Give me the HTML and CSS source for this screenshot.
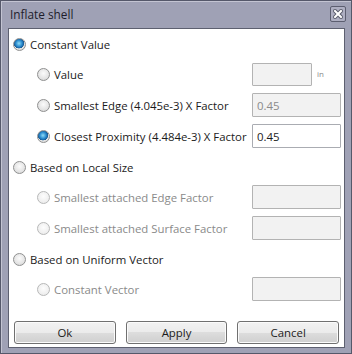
FILE: index.html
```html
<!DOCTYPE html>
<html lang="en">
<head>
    <meta charset="UTF-8">
    <meta name="viewport" content="width=device-width, initial-scale=1.0">
    <title>Inflate shell</title>
    <link rel="stylesheet" href="styles.css">
</head>
<body>
<div class="window">
    <div class="titlebar">
        <span class="title">Inflate shell</span>
        <span class="close-btn">
            <svg width="10" height="10" viewBox="0 0 10 10">
                <path d="M2 2 L8 8 M8 2 L2 8" stroke="#5a5c6c" stroke-width="4" stroke-linecap="square"/>
                <path d="M2 2 L8 8 M8 2 L2 8" stroke="#ffffff" stroke-width="2" stroke-linecap="square"/>
            </svg>
        </span>
    </div>

    <div class="content">
        <div class="groups">
            <!-- Constant value -->
            <div class="group">
                <label class="opt head"><input type="radio" name="mode" class="radio" checked> Constant Value</label>
                <div class="children">
                    <div class="row">
                        <label class="opt"><input type="radio" name="cv" class="radio"> Value</label>
                        <input type="text" class="field field-short" disabled>
                        <span class="unit">in</span>
                    </div>
                    <div class="row">
                        <label class="opt"><input type="radio" name="cv" class="radio"> Smallest Edge (4.045e-3) X Factor</label>
                        <input type="text" class="field" value="0.45" disabled>
                    </div>
                    <div class="row">
                        <label class="opt"><input type="radio" name="cv" class="radio" checked> Closest Proximity (4.484e-3) X Factor</label>
                        <input type="text" class="field" value="0.45">
                    </div>
                </div>
            </div>

            <!-- Local size -->
            <div class="group">
                <label class="opt head"><input type="radio" name="mode" class="radio"> Based on Local Size</label>
                <div class="children">
                    <div class="row">
                        <label class="opt off"><input type="radio" name="ls" class="radio" disabled> Smallest attached Edge Factor</label>
                        <input type="text" class="field" disabled>
                    </div>
                    <div class="row">
                        <label class="opt off"><input type="radio" name="ls" class="radio" disabled> Smallest attached Surface Factor</label>
                        <input type="text" class="field" disabled>
                    </div>
                </div>
            </div>

            <!-- Uniform vector -->
            <div class="group">
                <label class="opt head"><input type="radio" name="mode" class="radio"> Based on Uniform Vector</label>
                <div class="children">
                    <div class="row">
                        <label class="opt off"><input type="radio" name="uv" class="radio" disabled> Constant Vector</label>
                        <input type="text" class="field" disabled>
                    </div>
                </div>
            </div>
        </div>

        <div class="buttons">
            <button>Ok</button>
            <button>Apply</button>
            <button>Cancel</button>
        </div>
    </div>
</div>
</body>
</html>
```

FILE: styles.css
```css
body {
    margin: 0;
    font-family: 'Open Sans', sans-serif;
    font-size: 11.4px;
    color: #1b1b1b;
}

.window {
    width: 352px;
    height: 354px;
    box-sizing: border-box;
    border: 1px solid #55586a;
    box-shadow: inset 1px 1px 0 #c3c4d2;
    background-color: #9fa1b5;
    display: flex;
    flex-direction: column;
}

.titlebar {
    height: 27px;
    display: flex;
    align-items: center;
    justify-content: space-between;
    padding: 0 5px 0 9px;
}

.title {
    color: #1d1d2b;
    font-size: 11.8px;
    margin-top: -2px;
}

.close-btn {
    width: 14px;
    height: 14px;
    border: 1px solid #5c5e70;
    border-radius: 2px;
    background-color: #aeafc2;
    display: flex;
    align-items: center;
    justify-content: center;
    margin-top: -2px;
}

.content {
    flex: 1;
    margin: 0 6px 5px 7px;
    background-color: #fff;
    border: 1px solid #5d6070;
    padding: 3px 3px 3px 4px;
    display: flex;
    flex-direction: column;
}

.groups {
    display: flex;
    flex-direction: column;
    gap: 7px;
}

.group {
    display: flex;
    flex-direction: column;
    gap: 6px;
}

.children {
    display: flex;
    flex-direction: column;
    gap: 7px;
    padding-left: 24px;
}

.row {
    height: 24px;
    display: flex;
    align-items: center;
}

.opt {
    display: flex;
    align-items: center;
    flex: 1;
}

.opt.head {
    flex: none;
    height: 24px;
}

.opt.off {
    color: #8a8a8a;
}

.radio {
    appearance: none;
    -webkit-appearance: none;
    width: 13px;
    height: 13px;
    margin: 0 4px 0 0;
    border: 1px solid #8f9090;
    border-radius: 50%;
    box-sizing: border-box;
    background: radial-gradient(circle at 50% 40%, #fbfbfb 0%, #e4e4e4 60%, #cfcfcf 100%);
}

.radio:checked {
    background: radial-gradient(circle at 45% 40%, #8fdcf6 0%, #2b8ccf 35%, #185a94 55%, #e6e6e6 58%, #d0d0d0 100%);
}

.radio:disabled {
    border-color: #b7b8b8;
    background: radial-gradient(circle at 50% 40%, #fdfdfd 0%, #eeeeee 70%, #e2e2e2 100%);
}

.field {
    width: 89px;
    height: 24px;
    box-sizing: border-box;
    border: 1px solid #aaacb2;
    border-radius: 1px;
    padding: 0 4px;
    font-family: 'Open Sans', sans-serif;
    font-size: 11.4px;
    color: #1b1b1b;
    background-color: #fff;
}

.field:disabled {
    background-color: #f2f2f2;
    border-color: #b3b3b3;
    color: #8a8a8a;
}

.field-short {
    width: 60px;
    height: 23px;
}

.unit {
    width: 29px;
    font-size: 8px;
    color: #8a8a8a;
    padding-left: 5px;
    box-sizing: border-box;
    margin-top: -2px;
}

.buttons {
    margin-top: auto;
    display: grid;
    grid-template-columns: 1fr 1fr 1fr;
    gap: 10px;
    padding: 0 2px 0 1px;
}

button {
    height: 23px;
    border: 1px solid #707070;
    border-radius: 3px;
    background: linear-gradient(#f2f2f2 0%, #ebebeb 50%, #dddddd 50%, #cfcfcf 100%);
    box-shadow: inset 0 0 0 1px #fbfbfb;
    font-family: 'Open Sans', sans-serif;
    font-size: 11.4px;
    color: #1b1b1b;
    padding: 0;
}
```
